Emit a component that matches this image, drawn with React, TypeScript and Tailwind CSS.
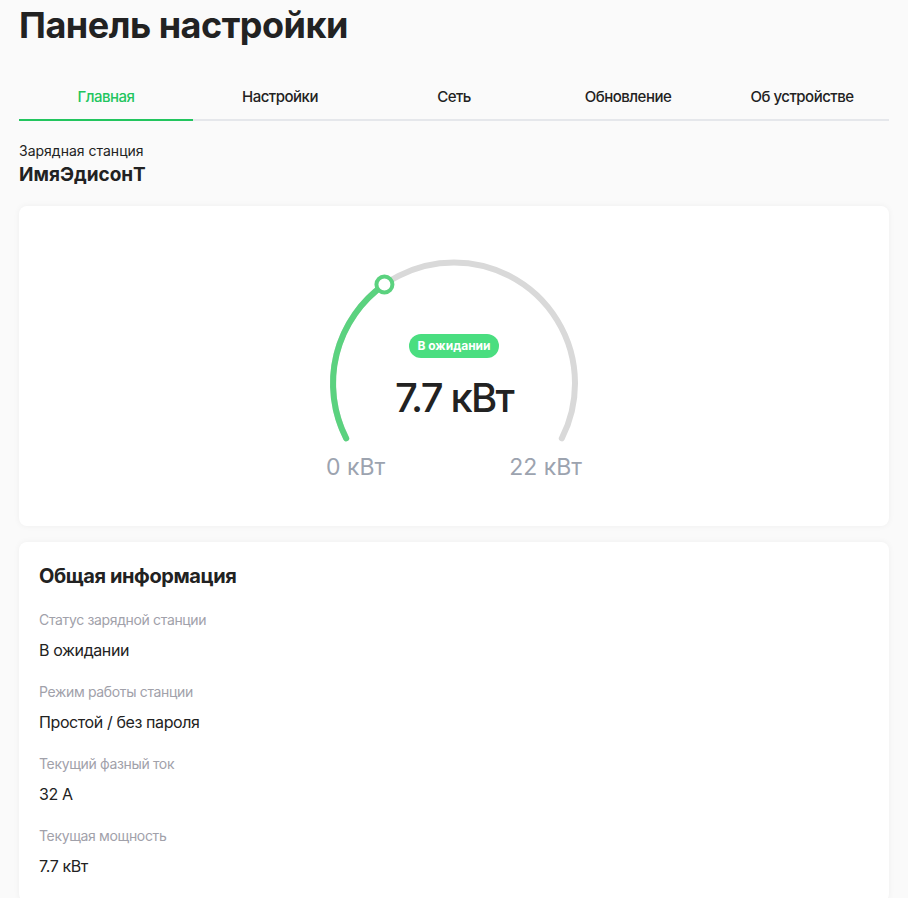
import React from "react";

const CX = 135;
const CY = 129.5;
const R = 121;
const SWEEP = 234;
const START = -SWEEP / 2;

function pt(deg: number) {
  const a = (deg * Math.PI) / 180;
  return { x: CX + R * Math.sin(a), y: CY - R * Math.cos(a) };
}

function arc(from: number, to: number) {
  const s = pt(from);
  const e = pt(to);
  const large = to - from > 180 ? 1 : 0;
  return `M ${s.x} ${s.y} A ${R} ${R} 0 ${large} 1 ${e.x} ${e.y}`;
}

function Gauge({ value, max }: { value: number; max: number }) {
  const valDeg = START + (value / max) * SWEEP;
  const knob = pt(valDeg);
  return (
    <div className="relative mx-auto w-[270px]">
      <svg width="270" height="201" viewBox="0 0 270 201" className="block">
        <path d={arc(START, -START)} fill="none" stroke="#d9d9d9" strokeWidth="6" strokeLinecap="round" />
        <path d={arc(START, valDeg)} fill="none" stroke="#5bd27f" strokeWidth="6" strokeLinecap="round" />
        <circle cx={knob.x} cy={knob.y} r="8" fill="#ffffff" stroke="#5bd27f" strokeWidth="4" />
      </svg>
      <div className="mt-[1px] flex justify-between px-[7px] text-[23px] leading-none text-[#9ca3af]">
        <span>0 кВт</span>
        <span>22 кВт</span>
      </div>
      <div className="absolute inset-x-0 top-[80px] flex flex-col items-center">
        <span className="flex h-6 items-center rounded-full bg-[#4ade80] px-2 text-[12px] font-bold text-white">
          В ожидании
        </span>
        <span className="mt-[19.5px] text-[40px] font-medium leading-none tracking-[-1.8px] text-[#222222]">
          7.7 кВт
        </span>
      </div>
    </div>
  );
}

const tabs = ["Главная", "Настройки", "Сеть", "Обновление", "Об устройстве"];

const info = [
  ["Статус зарядной станции", "В ожидании"],
  ["Режим работы станции", "Простой / без пароля"],
  ["Текущий фазный ток", "32 A"],
  ["Текущая мощность", "7.7 кВт"],
];

export default function App() {
  return (
    <div className="min-h-screen bg-[#fafafa] px-[19px] pt-[5px] pb-6 font-['Inter','Noto_Sans',sans-serif] text-[#222222]">
      <h1 className="text-4xl font-bold leading-10 tracking-[-0.5px]">Панель настройки</h1>

      <div className="mt-[30px] grid grid-cols-5">
        {tabs.map((t, i) => (
          <div
            key={t}
            className={
              i === 0
                ? "border-b-2 border-[#22c55e] pt-[10px] pb-[10px] text-center text-[15px] font-medium leading-6 tracking-[-0.5px] text-[#22c55e]"
                : "border-b-2 border-[#e5e7eb] pt-[10px] pb-[10px] text-center text-[15px] font-medium leading-6 tracking-[-0.5px] text-[#222222]"
            }
          >
            {t}
          </div>
        ))}
      </div>

      <div className="mt-5 text-sm leading-5">Зарядная станция</div>
      <div className="text-[19px] font-bold leading-7">ИмяЭдисонТ</div>

      <div className="mt-[17px] rounded-lg bg-white pt-[48px] pb-[47px] shadow-[0_0_6px_rgba(0,0,0,0.05)]">
        <Gauge value={7.7} max={22} />
      </div>

      <div className="mt-4 rounded-lg bg-white px-5 pt-5 pb-6 shadow-[0_0_6px_rgba(0,0,0,0.05)]">
        <h2 className="text-xl font-bold leading-7 tracking-[-0.4px]">Общая информация</h2>
        <div className="mt-5 flex flex-col gap-5">
          {info.map(([label, value]) => (
            <div key={label}>
              <div className="text-sm leading-5 tracking-[-0.35px] text-[#a1a1aa]">{label}</div>
              <div className="mt-2 text-base leading-6 tracking-[-0.4px] text-[#222222]">{value}</div>
            </div>
          ))}
        </div>
      </div>
    </div>
  );
}
